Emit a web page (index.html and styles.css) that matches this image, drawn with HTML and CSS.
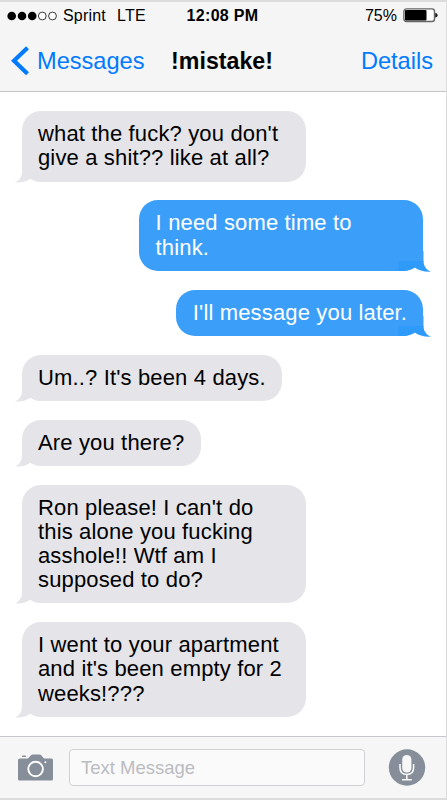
FILE: index.html
```html
<!DOCTYPE html>
<html lang="en">
<head>
  <meta charset="UTF-8" />
  <meta name="viewport" content="width=device-width, initial-scale=1.0"/>
  <title>Messages</title>
  <link rel="stylesheet" href="styles.css">
</head>
<body>
  <div class="phone">
    <header class="top">
      <div class="status-bar">
        <div class="carrier">
          <svg class="signal" width="50" height="10" viewBox="0 0 50 10">
            <circle cx="4.7" cy="5" r="4.3"/>
            <circle cx="15" cy="5" r="4.3"/>
            <circle cx="25.2" cy="5" r="4.3"/>
            <circle class="empty" cx="35.3" cy="5" r="3.9"/>
            <circle class="empty" cx="45.5" cy="5" r="3.9"/>
          </svg>
          <span class="name">Sprint</span>
          <span class="network">LTE</span>
        </div>
        <div class="time">12:08 PM</div>
        <div class="power">
          <span class="percent">75%</span>
          <svg width="35" height="15" viewBox="0 0 35 15">
            <rect x="0.9" y="0.9" width="30.6" height="12.6" rx="2.5" fill="#fff" stroke="#666" stroke-width="1.4"/>
            <rect x="2" y="2" width="21.5" height="10.4" rx="1"/>
            <path d="M32.2 5 Q34.6 5 34.6 7.2 Q34.6 9.5 32.2 9.5 Z" fill="#222"/>
          </svg>
        </div>
      </div>
      <nav class="nav-bar">
        <a class="back">
          <svg width="18" height="30" viewBox="0 0 18 30">
            <path d="M16.5 1.8 L3 14.7 L16.5 27.8" fill="none" stroke="#007aff" stroke-width="4.2"/>
          </svg>
          <span class="back-label">Messages</span>
        </a>
        <h1>!mistake!</h1>
        <a class="details">Details</a>
      </nav>
    </header>

    <main class="chat">
      <div class="bubble them">what the fuck? you don't give a shit?? like at all?
        <svg class="tail" viewBox="0 0 27 21"><path d="M7 0 V10 C7 15 4 19 0 20.5 C7 21 12 19 16 16.5 Q20 20 26 20 V0 Z"/></svg>
      </div>
      <div class="bubble me">I need some time to think.
        <svg class="tail" viewBox="0 0 33 21"><path class="side" d="M6 0 H25.5 V11 H6 Z"/><path d="M25.5 10 C25.5 15 28.5 19 33 20.7 C26 21 20.5 19.5 16.5 16.3 Q11 20 5 20 H0.5 V10 Z"/></svg>
      </div>
      <div class="bubble me">I'll message you later.
        <svg class="tail" viewBox="0 0 33 21"><path class="side" d="M6 0 H25.5 V11 H6 Z"/><path d="M25.5 10 C25.5 15 28.5 19 33 20.7 C26 21 20.5 19.5 16.5 16.3 Q11 20 5 20 H0.5 V10 Z"/></svg>
      </div>
      <div class="bubble them">Um..? It's been 4 days.
        <svg class="tail" viewBox="0 0 27 21"><path d="M7 0 V10 C7 15 4 19 0 20.5 C7 21 12 19 16 16.5 Q20 20 26 20 V0 Z"/></svg>
      </div>
      <div class="bubble them">Are you there?
        <svg class="tail" viewBox="0 0 27 21"><path d="M7 0 V10 C7 15 4 19 0 20.5 C7 21 12 19 16 16.5 Q20 20 26 20 V0 Z"/></svg>
      </div>
      <div class="bubble them">Ron please! I can't do this alone you fucking asshole!! Wtf am I supposed to do?
        <svg class="tail" viewBox="0 0 27 21"><path d="M7 0 V10 C7 15 4 19 0 20.5 C7 21 12 19 16 16.5 Q20 20 26 20 V0 Z"/></svg>
      </div>
      <div class="bubble them">I went to your apartment and it's been empty for 2 weeks!???
        <svg class="tail" viewBox="0 0 27 21"><path d="M7 0 V10 C7 15 4 19 0 20.5 C7 21 12 19 16 16.5 Q20 20 26 20 V0 Z"/></svg>
      </div>
    </main>

    <footer class="compose">
      <svg class="camera" width="35" height="27" viewBox="0 0 35 27">
        <path d="M2 4.6 H10 L13 1.2 Q13.7 0.5 14.7 0.5 H21.5 Q22.5 0.5 23.2 1.2 L26 4.6 H33.5 Q35 4.6 35 6.1 V25 Q35 26.5 33.5 26.5 H1.5 Q0 26.5 0 25 V6.1 Q0 4.6 2 4.6 Z" fill="#858e99"/>
        <rect x="4" y="1.6" width="4" height="1.5" rx="0.7" fill="#858e99"/>
        <circle cx="17.6" cy="15" r="7.3" fill="none" stroke="#fff" stroke-width="1.9"/>
        <circle cx="27.4" cy="8.2" r="1" fill="#fff"/>
      </svg>
      <div class="field">Text Message</div>
      <svg class="mic" width="38" height="38" viewBox="0 0 38 38">
        <circle cx="19" cy="18.5" r="18.2" fill="#858e99"/>
        <rect x="14.2" y="6" width="9.2" height="17.5" rx="4.6" fill="#f7f7f7"/>
        <path d="M12 15 V18.5 Q12 25.5 18.8 25.5 Q25.6 25.5 25.6 18.5 V15 M18.8 25.5 V30.5 M14 30.7 H23.8" fill="none" stroke="#f7f7f7" stroke-width="1.6"/>
      </svg>
    </footer>
  </div>
</body>
</html>
```

FILE: styles.css
```css
* {
  box-sizing: border-box;
}

body {
  margin: 0;
  font-family: "Liberation Sans", Arial, sans-serif;
  background: #fff;
  color: #000;
}

.phone {
  display: flex;
  flex-direction: column;
  width: 447px;
  height: 800px;
  border-top: 2px solid #dcdcdc;
  border-right: 1px solid #dcdcdc;
  border-bottom: 2px solid #dcdcdc;
  overflow: hidden;
}

.top {
  height: 90px;
  background: #f5f5f5;
  border-bottom: 1px solid #c4c4c6;
}

.status-bar {
  display: grid;
  grid-template-columns: 1fr auto 1fr;
  align-items: center;
  height: 27px;
  padding: 0 8px 0 7px;
  font-size: 16px;
}

.carrier {
  display: flex;
  align-items: center;
}

.name {
  margin-left: 6px;
  letter-spacing: 0.2px;
}

.network {
  margin-left: 11px;
  letter-spacing: 0.2px;
}

.empty {
  fill: #fff;
  stroke: #222;
  stroke-width: 0.9;
}

.time {
  font-weight: bold;
  letter-spacing: 0.3px;
}

.power {
  display: flex;
  align-items: center;
  justify-content: flex-end;
  gap: 6px;
}

.nav-bar {
  display: grid;
  grid-template-columns: 1fr auto 1fr;
  align-items: center;
  height: 64px;
  padding: 0 13px 0 11px;
  font-size: 23.6px;
}

.nav-bar a {
  color: #007aff;
}

.back {
  display: flex;
  align-items: center;
  gap: 8px;
}

h1 {
  margin: 0;
  font-size: 23.2px;
}

.details {
  text-align: right;
}

.chat {
  display: flex;
  flex: 1;
  flex-direction: column;
  align-items: flex-start;
  gap: 18.8px;
  padding: 19.2px 22.7px 0 21.8px;
}

.bubble {
  position: relative;
  isolation: isolate;
  max-width: 284.5px;
  padding: 11px 16.2px;
  border-radius: 19px;
  font-size: 22px;
  line-height: 24.2px;
  letter-spacing: 0.15px;
}

.them {
  background: #e5e4e9;
}

.me {
  align-self: flex-end;
  padding-left: 16.8px;
  background: #3b9ffa;
  color: #fff;
}

/* little curl at the bottom corner, kept behind the text */
.tail {
  position: absolute;
  z-index: -1;
  bottom: -1px;
  height: 21px;
}

.them .tail {
  left: -7px;
  width: 27px;
  fill: #e5e4e9;
}

.me .tail {
  right: -7.5px;
  width: 33px;
  fill: #2e9bfb;
}

.me .side {
  fill: #3b9ffa;
}

.compose {
  display: flex;
  align-items: center;
  height: 62px;
  padding: 0 20px 0 18px;
  background: #f6f6f6;
  border-top: 1px solid #c6c7cb;
}

.field {
  flex: 1;
  height: 37px;
  margin: 0 23px 0 16px;
  padding-left: 11px;
  border: 1px solid #d0d1d4;
  border-radius: 4px;
  background: #fafafa;
  color: #bbbcc1;
  font-size: 18.5px;
  line-height: 36px;
}
```
